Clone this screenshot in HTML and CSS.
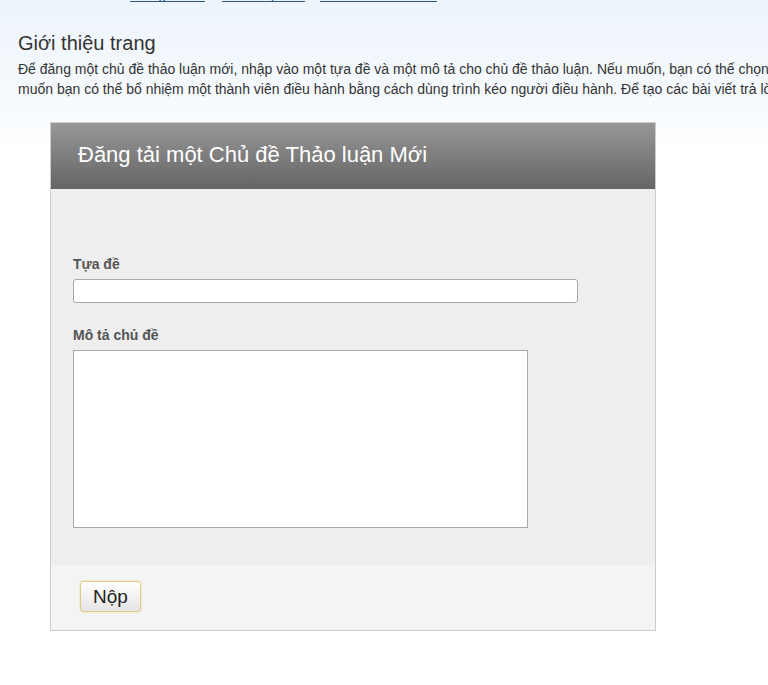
FILE: index.html
```html
<!DOCTYPE html>
<html lang="vi">
<head>
    <meta charset="UTF-8">
    <meta name="viewport" content="width=device-width, initial-scale=1.0">
    <title>Đăng tải một Chủ đề Thảo luận Mới</title>
    <link rel="stylesheet" href="styles.css">
</head>
<body>
    <div class="top-nav">
        <a href="#" class="nav-first">Trang chủ</a>
        <a href="#" class="nav-second">Thảo luận</a>
        <a href="#" class="nav-third">Danh sách chủ đề</a>
    </div>

    <div class="intro">
        <h1>Giới thiệu trang</h1>
        <p>Để đăng một chủ đề thảo luận mới, nhập vào một tựa đề và một mô tả cho chủ đề thảo luận. Nếu muốn, bạn có thể chọn một biểu tượng cho chủ đề. Nếu<br>muốn bạn có thể bổ nhiệm một thành viên điều hành bằng cách dùng trình kéo người điều hành. Để tạo các bài viết trả lời, hãy vào chủ đề.</p>
    </div>

    <div class="panel">
        <div class="panel-header">
            <h2>Đăng tải một Chủ đề Thảo luận Mới</h2>
        </div>
        <form id="topicForm">
            <div class="panel-body">
                <div class="form-group">
                    <label for="title">Tựa đề</label>
                    <input type="text" id="title" name="title">
                </div>
                <div class="form-group">
                    <label for="description">Mô tả chủ đề</label>
                    <textarea id="description" name="description"></textarea>
                </div>
            </div>
            <div class="panel-footer">
                <button type="submit">Nộp</button>
            </div>
        </form>
    </div>
</body>
</html>
```

FILE: styles.css
```css
html, body {
    overflow: hidden;
}
body {
    margin: 0;
    font-family: Arial, "Liberation Sans", sans-serif;
    color: #333;
    background: linear-gradient(#edf4fb 0px, #f6fafe 100px, #ffffff 150px) no-repeat;
    background-color: #fff;
    min-height: 685px;
}
.top-nav {
    margin-top: -13px;
    height: 16px;
    font-size: 14px;
    line-height: 14px;
    white-space: nowrap;
}
.top-nav a {
    display: inline-block;
    color: #2a5b8c;
    text-decoration: none;
    border-bottom: 1px solid #2a5b8c;
    overflow: hidden;
}
.nav-first {
    margin-left: 130px;
    width: 75px;
}
.nav-second {
    margin-left: 13px;
    width: 83px;
}
.nav-third {
    margin-left: 11px;
    width: 117px;
}
.intro {
    padding-left: 18px;
    width: 1100px;
}
.intro h1 {
    margin: 28px 0 4px;
    font-size: 20px;
    font-weight: normal;
    line-height: 24px;
    color: #333;
}
.intro p {
    margin: 0;
    font-size: 14px;
    line-height: 20px;
    color: #333;
    white-space: nowrap;
}
.panel {
    margin: 23px 0 0 50px;
    width: 604px;
    border: 1px solid #cccccc;
}
.panel-header {
    height: 66px;
    display: flex;
    align-items: center;
    padding-left: 27px;
    background: linear-gradient(#979797, #656565);
}
.panel-header h2 {
    margin: 0 0 2px;
    font-size: 22px;
    font-weight: normal;
    color: #fff;
}
.panel-body {
    background-color: #eeeeee;
    padding: 67px 0 37px 22px;
}
.form-group {
    margin-bottom: 24px;
}
.form-group:last-child {
    margin-bottom: 0;
}
.form-group label {
    display: block;
    font-size: 14px;
    font-weight: bold;
    line-height: 17px;
    color: #555;
    margin-bottom: 6px;
}
.form-group input {
    display: block;
    width: 505px;
    height: 24px;
    box-sizing: border-box;
    border: 1px solid #a9a9a9;
    border-radius: 3px;
    background: #fff;
}
.form-group textarea {
    display: block;
    width: 455px;
    height: 178px;
    box-sizing: border-box;
    border: 1px solid #a9a9a9;
    background: #fff;
    resize: none;
}
.panel-footer {
    background-color: #f4f4f4;
    padding: 16px 0 18px 29px;
}
.panel-footer button {
    width: 61px;
    height: 31px;
    font-family: Arial, "Liberation Sans", sans-serif;
    font-size: 19px;
    color: #222;
    border: 1px solid #e3cb82;
    border-radius: 3px;
    background: linear-gradient(#ffffff, #e4e4e4);
    box-shadow: 0 0 2px rgba(230, 200, 120, 0.6);
    cursor: pointer;
    padding: 0;
}
```
